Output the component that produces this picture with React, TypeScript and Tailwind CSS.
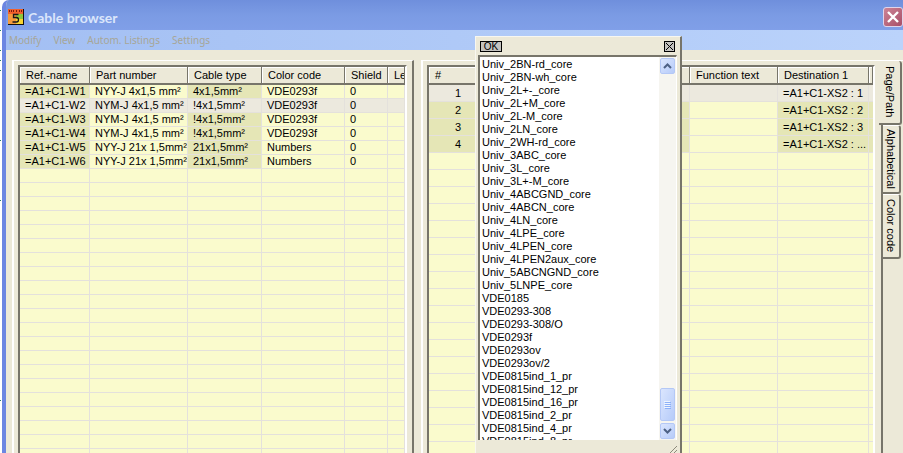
import React from 'react'

const cables = [
  ['=A1+C1-W1', 'NYY-J 4x1,5 mm²', '4x1,5mm²', 'VDE0293f', '0'],
  ['=A1+C1-W2', 'NYM-J 4x1,5 mm²', '!4x1,5mm²', 'VDE0293f', '0'],
  ['=A1+C1-W3', 'NYM-J 4x1,5 mm²', '!4x1,5mm²', 'VDE0293f', '0'],
  ['=A1+C1-W4', 'NYM-J 4x1,5 mm²', '!4x1,5mm²', 'VDE0293f', '0'],
  ['=A1+C1-W5', 'NYY-J 21x 1,5mm²', '21x1,5mm²', 'Numbers', '0'],
  ['=A1+C1-W6', 'NYY-J 21x 1,5mm²', '21x1,5mm²', 'Numbers', '0'],
]

const cores = [
  ['1', '=A1+C1-XS2 : 1'],
  ['2', '=A1+C1-XS2 : 2'],
  ['3', '=A1+C1-XS2 : 3'],
  ['4', '=A1+C1-XS2 : ...'],
]

const colorCodes = [
  'Univ_2BN-rd_core',
  'Univ_2BN-wh_core',
  'Univ_2L+-_core',
  'Univ_2L+M_core',
  'Univ_2L-M_core',
  'Univ_2LN_core',
  'Univ_2WH-rd_core',
  'Univ_3ABC_core',
  'Univ_3L_core',
  'Univ_3L+-M_core',
  'Univ_4ABCGND_core',
  'Univ_4ABCN_core',
  'Univ_4LN_core',
  'Univ_4LPE_core',
  'Univ_4LPEN_core',
  'Univ_4LPEN2aux_core',
  'Univ_5ABCNGND_core',
  'Univ_5LNPE_core',
  'VDE0185',
  'VDE0293-308',
  'VDE0293-308/O',
  'VDE0293f',
  'VDE0293ov',
  'VDE0293ov/2',
  'VDE0815ind_1_pr',
  'VDE0815ind_12_pr',
  'VDE0815ind_16_pr',
  'VDE0815ind_2_pr',
  'VDE0815ind_4_pr',
  'VDE0815ind_8_pr',
]

const emptyRows = (count: number) => Array.from({ length: count }, (_, i) => i)

const AppIcon = () => (
  <svg width="16" height="16" viewBox="0 0 16 16" className="shrink-0" aria-hidden="true">
    <rect width="16" height="16" fill="#111" />
    <rect width="15" height="5" fill="#f0602c" />
    <rect y="5" width="8" height="10" fill="#f49a3c" />
    <rect x="8" y="5" width="7" height="6" fill="#8cc63c" />
    <rect x="8" y="10" width="7" height="5" fill="#f8d430" />
    <path d="M1.500 1v2M3.500 1v2M5.500 1v2M8.500 1v2M11.500 1v2M13.500 1v2" stroke="#7c1c10" fill="none" />
    <path d="M10.500 5.500h-5v3h3q2 0 2 2.200t-2 2.300h-4" stroke="#181818" strokeWidth="1.300" fill="none" />
  </svg>
)

const TitleBar = () => (
  <header className="flex h-[30px] shrink-0 items-center gap-1 bg-linear-to-b from-[#6f8fdc] via-[#7b9be4] to-[#809fe8] pt-1 pl-[2px]">
    <AppIcon />
    <h1 className="flex-1 font-['Lato',sans-serif] text-[14px] font-bold text-[#dbe6fb]">
      Cable browser
    </h1>
    <button
      aria-label="Close"
      className="flex h-5 w-5 items-center justify-center rounded-[3px] border border-[#e0d4ea] bg-linear-to-br from-[#cc8496] to-[#a84e68]">
      <svg width="12" height="12" viewBox="0 0 12 12">
        <path d="M1 1l10 10M11 1L1 11" stroke="#fff" strokeWidth="2.4" />
      </svg>
    </button>
  </header>
)

const MenuBar = () => (
  <nav className="flex h-5 shrink-0 items-center gap-3 bg-linear-to-r from-[#a3bff3] to-[#bbd3fb] pl-[3px] font-['Noto_Sans',sans-serif] text-[10px] text-[#a7a697]">
    <button>Modify</button>
    <button>View</button>
    <button>Autom. Listings</button>
    <button>Settings</button>
  </nav>
)

const Th = ({ children }: { children?: React.ReactNode }) => (
  <th
    scope="col"
    className="h-[18px] overflow-hidden border-r border-b-2 border-r-[#77756a] border-b-[#77756a] bg-[#ece9d8] p-0 pl-1.5 text-left leading-4 font-normal whitespace-nowrap shadow-[inset_1px_1px_0_#fff]">
    {children}
  </th>
)

const cell = 'overflow-hidden border-r border-b border-[#e4e1dc] p-0 pl-[5px] whitespace-nowrap'

const CableTable = () => (
  <table className="w-full table-fixed border-separate border-spacing-0">
    <colgroup>
      <col className="w-[70px]" />
      <col className="w-[98px]" />
      <col className="w-[74px]" />
      <col className="w-[83px]" />
      <col className="w-[43px]" />
      <col />
    </colgroup>
    <thead>
      <tr>
        <Th>Ref.-name</Th>
        <Th>Part number</Th>
        <Th>Cable type</Th>
        <Th>Color code</Th>
        <Th>Shield</Th>
        <Th>Le</Th>
      </tr>
    </thead>
    <tbody>
      {cables.map((row, i) => {
        const plain = i === 1 ? 'bg-[#ece9de]' : 'bg-[#fafbcd]'
        const marked = i === 1 ? 'bg-[#ece9de]' : 'bg-[#e5e6b6]'
        return (
          <tr key={row[0]} className="h-[14px] leading-[13px]">
            {row.map((text, c) => (
              <td key={c} className={`${cell} ${c === 0 || c === 2 ? marked : plain}`}>
                {text}
              </td>
            ))}
            <td className={`${cell} ${plain}`}></td>
          </tr>
        )
      })}
      {emptyRows(60).map((i) => (
        <tr key={i} className="h-[14px]">
          <td className={cell}></td>
          <td className={cell}></td>
          <td className={cell}></td>
          <td className={cell}></td>
          <td className={cell}></td>
          <td className={cell}></td>
        </tr>
      ))}
    </tbody>
  </table>
)

const CoreTable = () => (
  <table className="w-full table-fixed border-separate border-spacing-0">
    <colgroup>
      <col className="w-[58px]" />
      <col />
      <col className="w-[88px]" />
      <col className="w-[91px]" />
      <col className="w-1" />
    </colgroup>
    <thead>
      <tr>
        <Th>#</Th>
        <Th />
        <Th>Function text</Th>
        <Th>Destination 1</Th>
        <Th />
      </tr>
    </thead>
    <tbody>
      {cores.map(([number, destination], i) => {
        const plain = i === 0 ? 'bg-[#ece9de]' : 'bg-[#fafbcd]'
        const marked = i === 0 ? 'bg-[#ece9de]' : 'bg-[#e5e6b6]'
        return (
          <tr key={number} className="h-[17px] leading-4">
            <td className={`border-b border-[#e4e1dc] p-0 text-center ${marked}`}>{number}</td>
            <td className={`${cell} ${marked}`}></td>
            <td className={`${cell} ${plain}`}></td>
            <td className={`${cell} ${marked}`}>{destination}</td>
            <td className={`border-b border-[#e4e1dc] p-0 ${marked}`}></td>
          </tr>
        )
      })}
      {emptyRows(50).map((i) => (
        <tr key={i} className="h-[17px]">
          <td className="border-b border-[#e4e1dc] p-0"></td>
          <td className={cell}></td>
          <td className={cell}></td>
          <td className={cell}></td>
          <td className="border-b border-[#e4e1dc] p-0"></td>
        </tr>
      ))}
    </tbody>
  </table>
)

const Sheet = ({ children }: { children: React.ReactNode }) => (
  <div className="h-full overflow-hidden border-t-2 border-r-2 border-l-2 border-t-[#77756a] border-r-white border-l-[#77756a] bg-[#fafbcd]">
    {children}
  </div>
)

const SideTabs = () => (
  <div className="flex w-6 shrink-0 flex-col" role="tablist" aria-orientation="vertical">
    <button
      role="tab"
      aria-selected="true"
      className="flex h-[64px] w-[23px] items-center justify-center rounded-r-[3px] border-r-2 border-b-2 border-r-[#77756a] border-b-[#77756a] bg-[#ece9d8] [writing-mode:vertical-rl]">
      Page/Path
    </button>
    <div className="ml-[2px] flex flex-1 flex-col border-l-2 border-[#77756a]">
      <button
        role="tab"
        aria-selected="false"
        className="flex h-[69px] w-[18px] items-center justify-center rounded-r-[3px] border-t border-r-2 border-b-2 border-t-white border-r-[#77756a] border-b-[#77756a] [writing-mode:vertical-rl]">
        Alphabetical
      </button>
      <button
        role="tab"
        aria-selected="false"
        className="flex h-[65px] w-[18px] items-center justify-center rounded-r-[3px] border-t border-r-2 border-b-2 border-t-white border-r-[#77756a] border-b-[#77756a] [writing-mode:vertical-rl]">
        Color code
      </button>
    </div>
  </div>
)

const scrollButton =
  'flex w-[15px] items-center justify-center rounded-[2px] border border-[#b4c8f6] bg-linear-to-br from-[#dbe6fe] to-[#b6cbf9]'

const ColorCodeList = () => (
  <div
    role="dialog"
    aria-label="Color code"
    className="absolute top-9 bottom-0 left-[475px] flex w-[207px] flex-col border-t border-r-2 border-l border-t-[#f8f7f0] border-r-[#77756a] border-l-[#f8f7f0] bg-[#ece9d8] pr-[3px] pl-[2px]">
    <div className="flex h-[18px] shrink-0 items-center justify-between px-[2px] pt-px">
      <button className="flex h-[11px] w-[22px] items-center justify-center border border-black bg-[#c4c3bf] text-[10px] leading-none">
        OK
      </button>
      <button
        aria-label="Close list"
        className="flex h-[11px] w-[11px] items-center justify-center border border-black bg-[#c4c3bf]">
        <svg width="9" height="9" viewBox="0 0 9 9">
          <path d="M1 1l7 7M8 1L1 8" stroke="#000" />
        </svg>
      </button>
    </div>
    <div className="flex min-h-0 flex-1 border-t-2 border-r border-l-2 border-t-[#77756a] border-r-white border-l-[#77756a] bg-white">
      <ul className="flex-1 overflow-hidden pt-px pl-[2px] leading-[13px]">
        {colorCodes.map((code) => (
          <li key={code}>{code}</li>
        ))}
      </ul>
      <div className="flex w-[17px] flex-col items-center bg-[#f6f5f0] py-px">
        <button aria-label="Scroll up" className={`${scrollButton} h-4`}>
          <svg width="9" height="6" viewBox="0 0 9 6">
            <path d="M1 5l3.500-3.500L8 5" stroke="#4d6185" strokeWidth="2" fill="none" />
          </svg>
        </button>
        <div className="flex-1"></div>
        <div className={`${scrollButton} h-[33px] flex-col`}>
          <svg width="7" height="8" viewBox="0 0 7 8">
            <path d="M0 .5h6M0 2.500h6M0 4.500h6M0 6.500h6" stroke="#eef4fe" />
            <path d="M1 1.500h6M1 3.500h6M1 5.500h6M1 7.500h6" stroke="#8cb0f8" />
          </svg>
        </div>
        <button aria-label="Scroll down" className={`${scrollButton} mt-[2px] h-4`}>
          <svg width="9" height="6" viewBox="0 0 9 6">
            <path d="M1 1l3.500 3.500L8 1" stroke="#4d6185" strokeWidth="2" fill="none" />
          </svg>
        </button>
      </div>
    </div>
    <div className="flex h-[13px] shrink-0 items-end justify-end">
      <svg width="7" height="7" viewBox="0 0 7 7">
        <path d="M0 7L7 0M4 7l3-3" stroke="#8c8a7c" />
      </svg>
    </div>
  </div>
)

// edge of the drawing sheet that lies behind the window
const SheetEdge = () => (
  <svg width="2" height="453" viewBox="0 0 2 453" className="shrink-0" aria-hidden="true">
    <path
      d="M0 10.500h1M0 30.500h1M0 50.500h1M0 60.500h1M0 70.500h1M0 140.500h1M0 200.500h1M0 400.500h1"
      stroke="#2c8068"
    />
  </svg>
)

const App = () => {
  return (
    <div className="relative flex h-screen overflow-hidden bg-white font-['Liberation_Sans',Arial,sans-serif] text-[11px] text-black">
      <SheetEdge />
      <div className="flex h-full min-w-0 flex-1 flex-col overflow-hidden rounded-tl-[7px] border-l-4 border-[#6c86e2] bg-[#ece9d8]">
        <TitleBar />
        <MenuBar />
        <main className="flex min-h-0 flex-1 gap-[7px] pt-[10px] pl-[6px]">
          <section className="w-[402px] shrink-0 border-t border-r-2 border-l-2 border-t-white border-r-[#77756a] border-l-white pt-1 pr-[5px] pl-1">
            <Sheet>
              <CableTable />
            </Sheet>
          </section>
          <section className="flex min-w-0 flex-1 border-t border-l-2 border-white">
            <div className="min-w-0 flex-1 pt-1 pr-1 pl-1">
              <Sheet>
                <CoreTable />
              </Sheet>
            </div>
            <SideTabs />
          </section>
        </main>
      </div>
      <ColorCodeList />
    </div>
  )
}
export default App
